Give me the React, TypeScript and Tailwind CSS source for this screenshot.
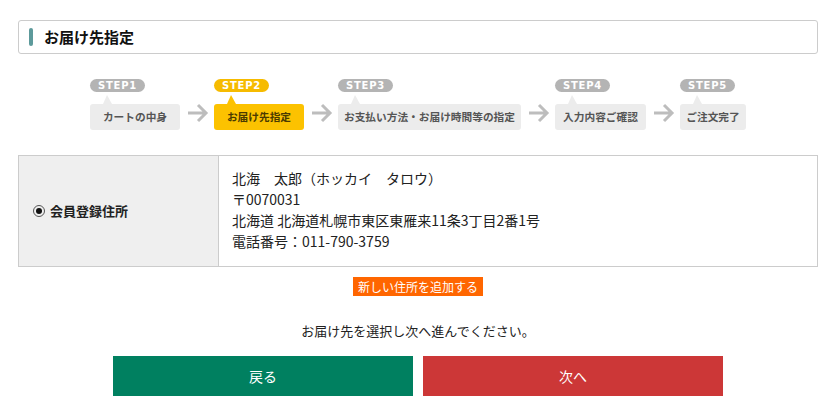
const steps = [
  { no: "STEP1", label: "カートの中身", w: "w-[90px]", active: false },
  { no: "STEP2", label: "お届け先指定", w: "w-[90px]", active: true },
  { no: "STEP3", label: "お支払い方法・お届け時間等の指定", w: "w-[183px]", active: false },
  { no: "STEP4", label: "入力内容ご確認", w: "w-[91px]", active: false },
  { no: "STEP5", label: "ご注文完了", w: "w-[66px]", active: false },
];

function Arrow() {
  return (
    <svg width="34" height="22" viewBox="0 0 34 22" className="mt-[23px] shrink-0">
      <path d="M8 11 H26 M18 3 L26 11 L18 19" fill="none" stroke="#bdbdbd" strokeWidth="3" />
    </svg>
  );
}

function Step({ step }) {
  const pill = step.active ? "bg-[#f6bb00]" : "bg-[#b4b4b4]";
  const box = step.active ? "bg-[#fcc200] text-[#4a3a00]" : "bg-[#ececec] text-[#555]";
  const tri = step.active ? "border-b-[#fcc200]" : "border-b-[#ececec]";
  return (
    <div className={`flex flex-col shrink-0 ${step.w}`}>
      <div
        className={`${pill} w-[55px] h-[13px] rounded-full text-white text-[10px] font-bold leading-[13px] text-center tracking-[0.8px]`}
        style={{ fontFamily: "'DejaVu Sans', 'Liberation Sans', sans-serif" }}
      >
        {step.no}
      </div>
      <div className="relative mt-[12px]">
        <div
          className={`absolute -top-[9px] left-[13px] w-0 h-0 border-l-[4px] border-r-[5px] border-b-[9px] border-l-transparent border-r-transparent ${tri}`}
        />
        <div className={`${box} h-[26px] rounded-[3px] text-[10.7px] font-bold flex items-center justify-center whitespace-nowrap`}>
          {step.label}
        </div>
      </div>
    </div>
  );
}

export default function App() {
  return (
    <div
      className="w-[835px] h-[418px] bg-white text-[#222] pt-[20px]"
      style={{ fontFamily: "'Noto Sans CJK JP', 'Noto Sans', sans-serif" }}
    >
      <div className="w-[800px] ml-[18px]">
        <div className="h-[34px] border border-[#cccccc] rounded-[3px] flex items-center pl-[10px]">
          <div className="w-[4px] h-[18px] bg-[#5d9a9b] rounded-[2px]" />
          <div className="ml-[11px] text-[15px] font-bold text-[#111]">お届け先指定</div>
        </div>

        <div className="flex justify-center mt-[25px]">
          {steps.map((s, i) => (
            <div key={s.no} className="flex">
              {i > 0 && <Arrow />}
              <Step step={s} />
            </div>
          ))}
        </div>

        <div className="mt-[25px] flex border border-[#cccccc]">
          <div className="w-[200px] bg-[#efefef] border-r border-[#cccccc] flex items-center pl-[14px]">
            <span className="w-[12px] h-[12px] rounded-full border border-[#555] flex items-center justify-center">
              <span className="w-[6px] h-[6px] rounded-full bg-[#111]" />
            </span>
            <span className="ml-[5px] text-[13px] font-bold">会員登録住所</span>
          </div>
          <div className="pl-[13px] pt-[12px] pb-[14px] text-[14px] leading-[21px]">
            <div>北海　太郎（ホッカイ　タロウ）</div>
            <div>〒0070031</div>
            <div>北海道 北海道札幌市東区東雁来11条3丁目2番1号</div>
            <div>電話番号：011-790-3759</div>
          </div>
        </div>

        <div className="flex justify-center mt-[10px]">
          <div className="bg-[#ff6600] text-white text-[12px] h-[19px] w-[130px] flex items-center justify-center">
            新しい住所を追加する
          </div>
        </div>

        <div className="text-center text-[13px] mt-[25px] leading-[20px]">
          お届け先を選択し次へ進んでください。
        </div>

        <div className="flex justify-center gap-[10px] mt-[15px]">
          <div className="w-[300px] h-[40px] bg-[#008060] text-white text-[14px] flex items-center justify-center">
            戻る
          </div>
          <div className="w-[300px] h-[40px] bg-[#cc3737] text-white text-[14px] flex items-center justify-center">
            次へ
          </div>
        </div>
      </div>
    </div>
  );
}
